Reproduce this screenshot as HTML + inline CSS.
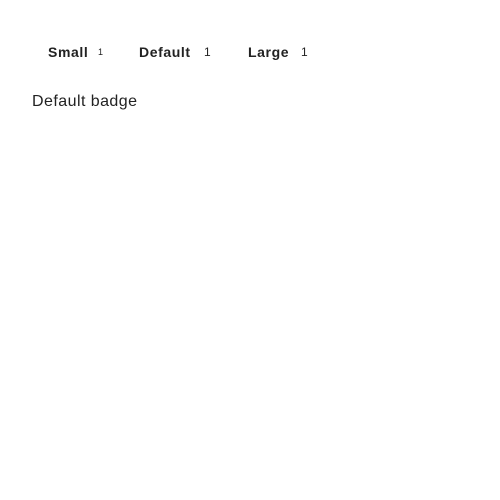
<!DOCTYPE html>
<html><head><meta charset="utf-8"><style>
body{margin:0;width:500px;height:500px;background:#fff;font-family:"Liberation Sans",sans-serif;color:#222;position:relative}
.t{position:absolute;white-space:nowrap}
.b{font-weight:bold;font-size:14px;letter-spacing:0.6px}
</style></head><body>
<div class="t b" style="left:48px;top:44px">Small</div>
<div class="t" style="left:98px;top:47px;font-size:9px">1</div>
<div class="t b" style="left:139px;top:44px">Default</div>
<div class="t" style="left:204px;top:45px;font-size:12px">1</div>
<div class="t b" style="left:248px;top:44px">Large</div>
<div class="t" style="left:301px;top:45px;font-size:12px">1</div>
<div class="t" style="left:32px;top:93px;font-size:16px;letter-spacing:0.45px">Default badge</div>
</body></html>
